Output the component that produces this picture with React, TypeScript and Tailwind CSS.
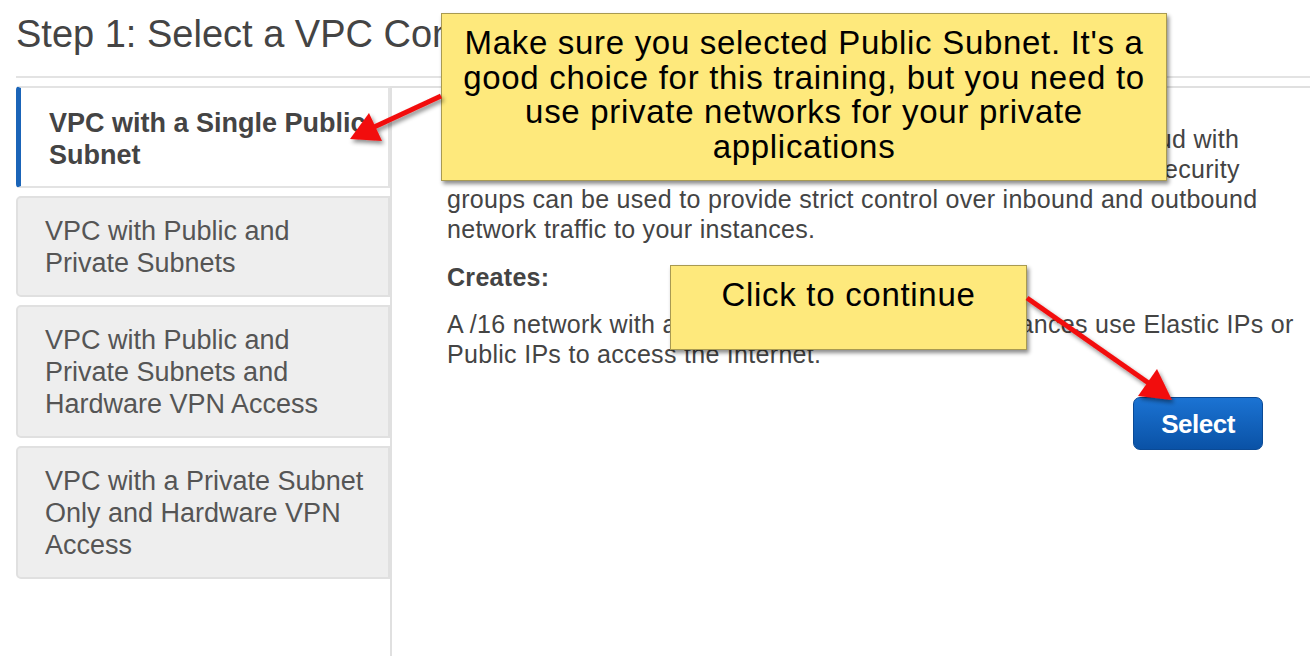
import React from 'react';

const tabs = [
    ['VPC with Public and', 'Private Subnets'],
    ['VPC with Public and', 'Private Subnets and', 'Hardware VPN Access'],
    ['VPC with a Private Subnet', 'Only and Hardware VPN', 'Access'],
];

export default function App() {
    return (
        <div className="relative w-[1310px] h-[656px] overflow-hidden bg-white font-['Liberation_Sans',Arial,sans-serif]">
            <h1 className="pl-4 pt-[13px] text-[38px] leading-[42px] text-[#444]">Step 1: Select a VPC Configuration</h1>
            <div className="ml-4 mt-[21px] border-t-2 border-[#e3e3e3]" />

            <div className="flex mt-[8px] h-[570px]">
                {/* Tabs */}
                <div className="ml-4 w-[374px] flex flex-col gap-[8px] shrink-0">
                    <div className="bg-white border-2 border-[#e3e3e3] border-l-[5px] border-l-[#1a64b8] rounded-l-[4px] pl-[28px] pt-[19px] pb-[15px] text-[27px] leading-[32px] font-bold text-[#444]">
                        <div>VPC with a Single Public</div>
                        <div>Subnet</div>
                    </div>
                    {tabs.map((lines, i) => (
                        <div key={i} className="bg-[#eee] border-2 border-[#e0e0e0] rounded-l-[5px] pl-[27px] pt-[17px] pb-[16px] text-[27px] leading-[32px] text-[#555]">
                            {lines.map(l => <div key={l}>{l}</div>)}
                        </div>
                    ))}
                </div>

                {/* Content */}
                <div className="flex-1 min-w-0 border-l-2 border-t-2 border-[#e0e0e0] pl-[55px] pr-[47px] pt-[36px] text-[25px] leading-[30px] tracking-[0.3px] text-[#444]">
                    <p>
                        <span className="block whitespace-nowrap">Your instances run in a private, isolated section of the AWS cloud with</span>
                        <span className="block whitespace-nowrap">direct access to the Internet. Network access control lists and security</span>
                        <span className="block whitespace-nowrap">groups can be used to provide strict control over inbound and outbound</span>
                        <span className="block whitespace-nowrap">network traffic to your instances.</span>
                    </p>
                    <p className="mt-[18px] font-bold">Creates:</p>
                    <p className="mt-[17px]">
                        <span className="block whitespace-nowrap">A /16 network with a /24 subnet. Public subnet instances use Elastic IPs or</span>
                        <span className="block whitespace-nowrap">Public IPs to access the Internet.</span>
                    </p>
                    <div className="flex justify-end mt-[28px]">
                        <button className="w-[130px] h-[53px] rounded-[7px] border border-[#0a4a96] bg-gradient-to-b from-[#1b73d3] to-[#0a52a6] text-white font-bold text-[26px] tracking-[-0.5px]">
                            Select
                        </button>
                    </div>
                </div>
            </div>

            {/* Callouts */}
            <div className="absolute left-[441px] top-[13px] w-[726px] h-[168px] bg-[#fee97c] border border-[#a89a52] shadow-[2px_3px_4px_rgba(0,0,0,0.45)] pt-[12px] text-center text-[33px] leading-[34.5px] tracking-[0.7px] text-black">
                <div className="whitespace-nowrap">Make sure you selected Public Subnet. It's a</div>
                <div className="whitespace-nowrap">good choice for this training, but you need to</div>
                <div className="whitespace-nowrap">use private networks for your private</div>
                <div className="whitespace-nowrap">applications</div>
            </div>
            <div className="absolute left-[670px] top-[265px] w-[357px] h-[85px] bg-[#fee97c] border border-[#a89a52] shadow-[2px_3px_4px_rgba(0,0,0,0.45)] pt-[12px] text-center text-[33px] leading-[34.5px] tracking-[0.7px] text-black">
                Click to continue
            </div>

            {/* Arrows */}
            <svg className="absolute inset-0 pointer-events-none" width="1310" height="656">
                <defs>
                    <filter id="sh" x="-20%" y="-20%" width="140%" height="140%">
                        <feDropShadow dx="2" dy="3" stdDeviation="2" floodColor="#000" floodOpacity="0.45" />
                    </filter>
                </defs>
                <g filter="url(#sh)" fill="#f20d0d" stroke="#f20d0d">
                    <line x1="441" y1="96" x2="372" y2="128" strokeWidth="5" />
                    <polygon points="350,139 382,141 369,113" stroke="none" />
                    <line x1="1027" y1="298" x2="1150" y2="384" strokeWidth="5" />
                    <polygon points="1172,400 1138,396 1157,369" stroke="none" />
                </g>
            </svg>
        </div>
    );
}
